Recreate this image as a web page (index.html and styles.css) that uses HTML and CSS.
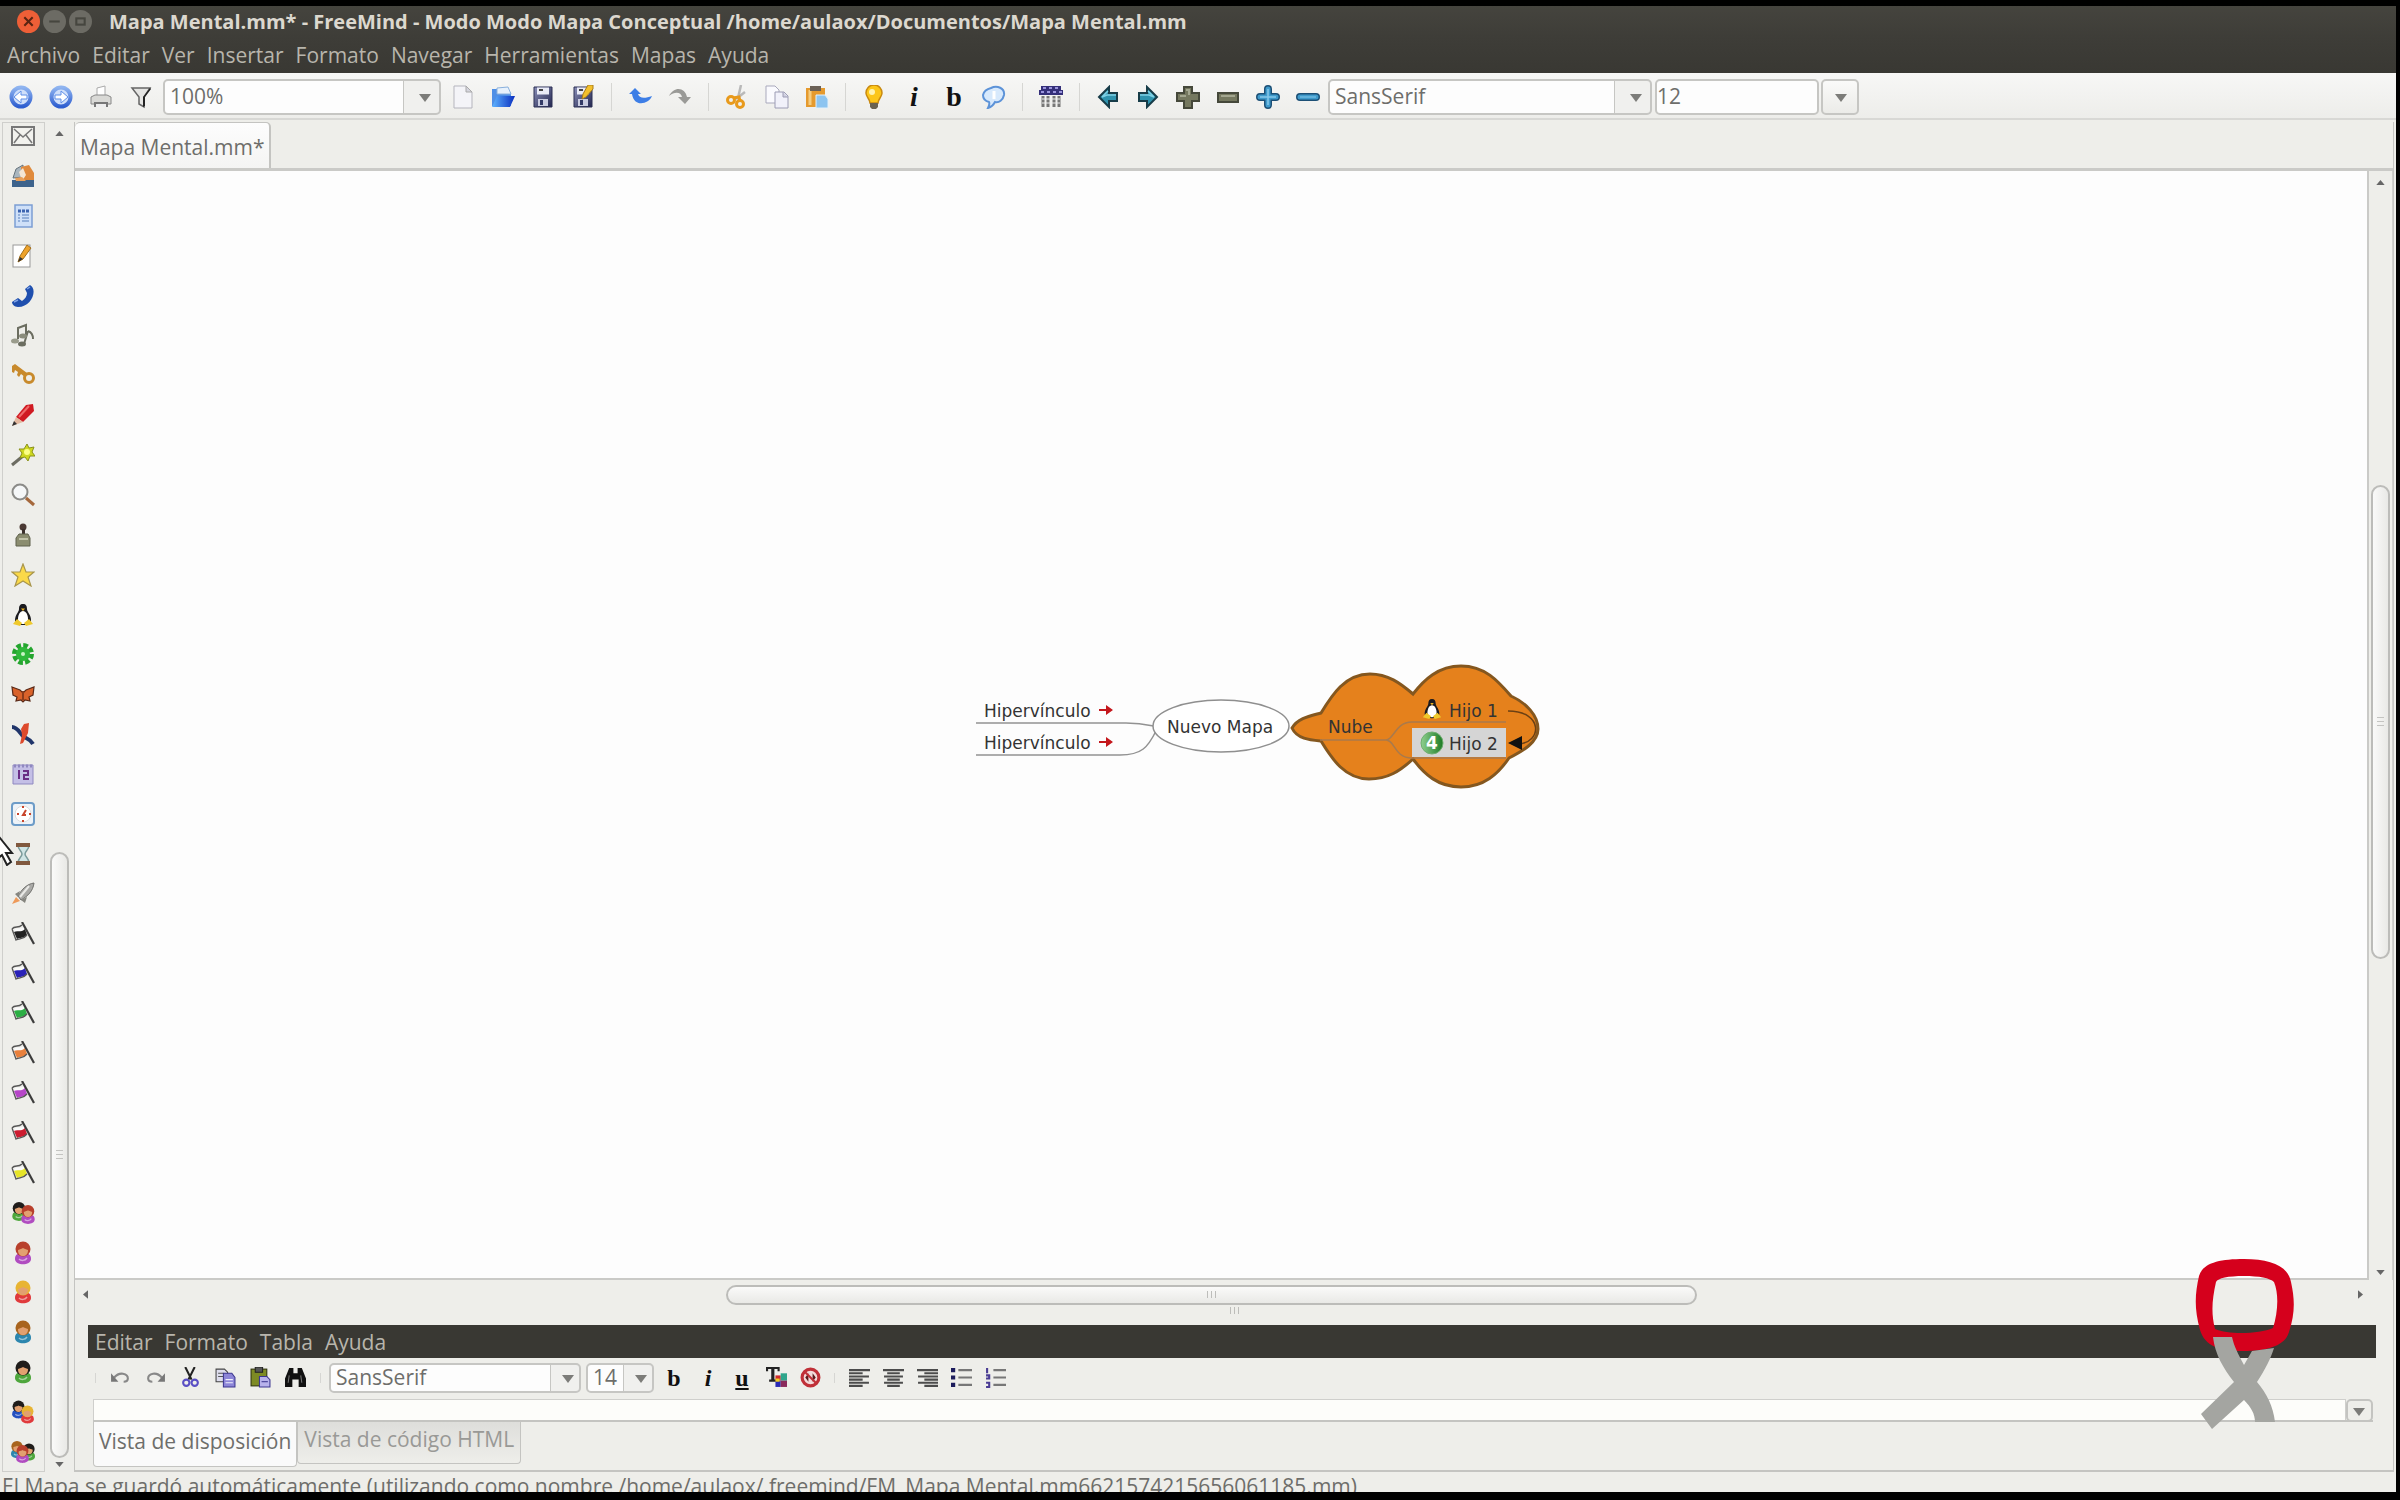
FILE: index.html
```html
<!DOCTYPE html>
<html lang="es">
<head>
  <meta charset="UTF-8" />
  <meta name="viewport" content="width=device-width, initial-scale=1.0" />
  <title>Mapa Mental.mm* - FreeMind</title>
  <link rel="stylesheet" href="styles.css">
</head>
<body>
  <!-- shared icon shapes -->
  <svg class="sprite" aria-hidden="true">
    <defs>
      <linearGradient id="gBlue" x1="0" y1="0" x2="0" y2="1"><stop offset="0" stop-color="#8fb4f0"/><stop offset="1" stop-color="#2f5fd0"/></linearGradient>
      <linearGradient id="gOpen" x1="0" y1="0" x2="1" y2="0"><stop offset="0" stop-color="#5fb4ff"/><stop offset="1" stop-color="#0a2fc0"/></linearGradient>
      <linearGradient id="gDisk" x1="0" y1="0" x2="1" y2="1"><stop offset="0" stop-color="#8a8fb8"/><stop offset="1" stop-color="#23264f"/></linearGradient>
      <linearGradient id="gBall" x1="0" y1="0" x2="1" y2="0"><stop offset="0" stop-color="#8fd08f"/><stop offset="1" stop-color="#1c7a24"/></linearGradient>
    </defs>
    <symbol id="nav-left" viewBox="0 0 24 24"><circle cx="12" cy="12" r="9.500" fill="#cfdffa" stroke="url(#gBlue)" stroke-width="4"/><path d="M18 10h-6V6l-7 6 7 6v-4h6z" fill="#fff" stroke="#5f8fe8"/></symbol>
    <symbol id="nav-right" viewBox="0 0 24 24"><circle cx="12" cy="12" r="9.500" fill="#cfdffa" stroke="url(#gBlue)" stroke-width="4"/><path d="M6 10h6V6l7 6-7 6v-4H6z" fill="#fff" stroke="#5f8fe8"/></symbol>
    <symbol id="disk" viewBox="0 0 24 24"><path d="M3 2h18v20H3z" fill="url(#gDisk)" stroke="#2d3055"/><path d="M6 2.500h12v7H6z" fill="#e9ebf6"/><path d="M8 5h4" stroke="#444" stroke-width="2"/><path d="M7 14h10v7H7z" fill="#c9cce0"/><path d="M9 15h3v5H9z" fill="#333a66"/></symbol>
    <symbol id="penguin" viewBox="0 0 24 24"><path d="M12 1c3 0 4 2 4 5 0 3 4 6 4 11 0 3-3 5-8 5s-8-2-8-5c0-5 4-8 4-11 0-3 1-5 4-5z" fill="#1a1a1e"/><path d="M12 8c3 0 5 4 5 8 0 3-2 5-5 5s-5-2-5-5c0-4 2-8 5-8z" fill="#fff"/><path d="M10 5.500h4L12 8z" fill="#e8b020"/><path d="M2 21l4-5 5 4-2 3zM22 21l-4-5-5 4 2 3z" fill="#efc92c"/></symbol>
    <symbol id="flag" viewBox="0 0 24 24"><path d="M3 8c3-3 6 0 10-3l3 8c-4 4-7 2-10 4z" fill="#fafafa"/><path d="M3 10c3-2 7 1 11-3l2 6c-4 4-7 2-10 4z" fill="currentColor"/><path d="M1 7c3-4 6 0 10-4M1 7l4 11c4-2 7 0 11-5" fill="none" stroke="#555" stroke-width="1.300"/><path d="M11 0l12 22" stroke="#3c3c3c" stroke-width="2.200"/></symbol>
    <symbol id="person" viewBox="0 0 24 24"><path d="M4 18c0-5 3-6 8-6s8 1 8 6c0 7-16 7-16 0z" fill="var(--body)"/><circle cx="12" cy="8" r="7.500" fill="var(--hair)"/><path d="M7 9c2-1 4-1 5-2 1 1 3 1 5 2 0 4-2 6-5 6s-5-2-5-6z" fill="#e2a070"/><path d="M8 18c2 2 6 2 8-1" stroke="#fff" stroke-width="1.500" opacity="0.500" fill="none"/></symbol>
    <symbol id="pageup" viewBox="0 0 10 6"><path d="M0 6l5-6 5 6z" fill="#666"/></symbol>
    <symbol id="blackarrow" viewBox="0 0 24 24"><path d="M21 8v8h-8v6L3 12 13 2v6z" fill="#2f93ae" stroke="#173c48" stroke-width="2"/><path d="M12 6l-6 6 5-2h9" fill="none" stroke="#7fd0e4" stroke-width="1.500"/></symbol>
  </svg>

  <div class="window">
    <header class="titlebar">
      <button class="wm wm-close" aria-label="Cerrar"><svg viewBox="0 0 22 22"><path d="M7 7l8 8M15 7l-8 8" stroke="#5a2412" stroke-width="2"/></svg></button>
      <button class="wm" aria-label="Minimizar"><svg viewBox="0 0 22 22"><path d="M6 11h10" stroke="#46463f" stroke-width="2"/></svg></button>
      <button class="wm" aria-label="Maximizar"><svg viewBox="0 0 22 22"><rect x="7" y="8" width="8" height="6" fill="none" stroke="#46463f" stroke-width="2"/></svg></button>
      <h1 class="title">Mapa Mental.mm* - FreeMind - Modo Modo Mapa Conceptual /home/aulaox/Documentos/Mapa Mental.mm</h1>
    </header>

    <nav class="menubar">
      <a href="#">Archivo</a><a href="#">Editar</a><a href="#">Ver</a><a href="#">Insertar</a><a href="#">Formato</a><a href="#">Navegar</a><a href="#">Herramientas</a><a href="#">Mapas</a><a href="#">Ayuda</a>
    </nav>

    <div class="toolbar">
      <button class="tool" aria-label="Mapa anterior"><svg><use href="#nav-left"/></svg></button>
      <button class="tool" aria-label="Mapa siguiente"><svg><use href="#nav-right"/></svg></button>
      <button class="tool" aria-label="Imprimir"><svg viewBox="0 0 24 24"><path d="M8 12V3l8-2v11" fill="#fff" stroke="#aaa"/><path d="M2 12l4-2h12l4 2v7H2z" fill="#d9d9d6" stroke="#888"/><path d="M5 17h14v5H5z" fill="#777"/><path d="M7 19h10v3H7z" fill="#eee"/></svg></button>
      <button class="tool" aria-label="Filtrar"><svg viewBox="0 0 24 24"><path d="M3 3h18l-6 9v10l-5-3v-7z" fill="#e4e4e2" stroke="#666" stroke-width="1.500"/><path d="M21 3l-7 9v10l2-1V12l6-8z" fill="#222"/></svg></button>
      <span class="combo combo-zoom"><select aria-label="Zoom"><option>100%</option></select></span>
      <button class="tool" aria-label="Nuevo"><svg viewBox="0 0 24 24"><path d="M3 1h12l6 6v16H3z" fill="#f4f4f8" stroke="#b5b5bd"/><path d="M15 1v6h6z" fill="#d5d5de" stroke="#aaa"/></svg></button>
      <button class="tool" aria-label="Abrir"><svg viewBox="0 0 24 24"><path d="M1 4h8l2 3h9v14H1z" fill="#4f8fe6"/><path d="M6 3l11-1 3 7H6z" fill="#e7f1fc" stroke="#8ab0dc"/><path d="M1 22l5-11h18l-5 11z" fill="url(#gOpen)"/></svg></button>
      <button class="tool" aria-label="Guardar"><svg><use href="#disk"/></svg></button>
      <button class="tool" aria-label="Guardar como"><svg viewBox="0 0 24 24"><use href="#disk"/><path d="M11 14l1-5 5-9h5v4l-7 8z" fill="#f3c02c" stroke="#a87c1c"/></svg></button>
      <span class="sep"></span>
      <button class="tool" aria-label="Deshacer"><svg viewBox="0 0 24 24"><path d="M1 9l6-6 6 6H10c1 4 6 5 14 2-3 8-18 12-20-2z" fill="#3d7ee6"/></svg></button>
      <button class="tool" aria-label="Rehacer"><svg viewBox="0 0 24 24"><path d="M1 11C6 1 17 2 19 12h4l-6 7-7-7h4C13 7 7 6 1 11z" fill="#9a9a97"/></svg></button>
      <span class="sep"></span>
      <button class="tool" aria-label="Cortar"><svg viewBox="0 0 24 24"><path d="M16 0l-3 13M20 7l-9 7" stroke="#b9b9b9" stroke-width="2.500"/><path d="M8 13l6-1 1 4" fill="none" stroke="#e89a1c" stroke-width="3"/><circle cx="6" cy="15" r="3.500" fill="none" stroke="#e89a1c" stroke-width="3"/><circle cx="15" cy="19" r="3.500" fill="none" stroke="#e89a1c" stroke-width="3"/></svg></button>
      <button class="tool" aria-label="Copiar"><svg viewBox="0 0 24 24"><path d="M1 1h9l4 4v13H1z" fill="#fafafe" stroke="#a9a9bc"/><path d="M10 7h9l4 4v12H10z" fill="#f1f1fa" stroke="#9c9cb4"/><path d="M18 7v5h5" fill="#d0d0e0" stroke="#9c9cb4"/></svg></button>
      <button class="tool" aria-label="Pegar"><svg viewBox="0 0 24 24"><rect x="1" y="3" width="19" height="19" fill="#e59a2e"/><path d="M5 5v15" stroke="#f5cc7e" stroke-width="3"/><path d="M5 1h11v5H5z" fill="#6b6157"/><path d="M11 10h9l3 4v9H11z" fill="#8cc4f0" stroke="#e3f1fb"/></svg></button>
      <span class="sep"></span>
      <button class="tool" aria-label="Idea"><svg viewBox="0 0 24 24"><path d="M12 0c5 0 8 4 8 8 0 4-4 6-4 10H8c0-4-4-6-4-10 0-4 3-8 8-8z" fill="#fcc61a" stroke="#c98a10" stroke-width="1.500"/><circle cx="10" cy="7" r="3" fill="#fff3b0"/><path d="M8 18h8v4l-2 2h-4l-2-2z" fill="#6a6250"/></svg></button>
      <button class="tool glyph glyph-i" aria-label="Cursiva">i</button>
      <button class="tool glyph" aria-label="Negrita">b</button>
      <button class="tool" aria-label="Nube"><svg viewBox="0 0 24 24"><path d="M9 3c6-3 14 0 13 7-1 5-5 8-9 7-1 2-4 5-7 6 1-2 2-4 1-6-4-1-6-3-6-7 1-4 4-6 8-7z" fill="#d7e9fc" stroke="#5d93d8" stroke-width="2"/><path d="M12 6v8" stroke="#fff" stroke-width="3"/></svg></button>
      <span class="sep"></span>
      <button class="tool" aria-label="Atributos"><svg viewBox="0 0 24 24"><path d="M2 1h20v4h2v5H0V5h2z" fill="#35307a"/><path d="M4 3h3M10 3h3M16 3h3M2 7h3M8 7h3M14 7h3M20 7h3" stroke="#9a94dc" stroke-width="2"/><path d="M4 11v11M9 11v11M15 11v11M20 11v11" stroke="#777" stroke-width="3"/><path d="M3 14h18M3 18h18" stroke="#eee"/></svg></button>
      <span class="sep"></span>
      <button class="tool" aria-label="Anterior"><svg><use href="#blackarrow"/></svg></button>
      <button class="tool" aria-label="Siguiente"><svg class="flip"><use href="#blackarrow"/></svg></button>
      <button class="tool" aria-label="Ampliar"><svg viewBox="0 0 24 24"><path d="M8 2h8v6h7v8h-7v7H8v-7H1V8h7z" fill="#75785f" stroke="#45483a" stroke-width="2"/><path d="M10 5h3v5M4 11h6" stroke="#a3a68f" stroke-width="2" fill="none"/></svg></button>
      <button class="tool" aria-label="Reducir"><svg viewBox="0 0 24 24"><rect x="2" y="8" width="20" height="9" fill="#75785f" stroke="#45483a" stroke-width="2"/><path d="M5 11h14" stroke="#a3a68f" stroke-width="2"/></svg></button>
      <button class="tool" aria-label="Desplegar"><svg viewBox="0 0 24 24"><path d="M12 4v16M4 12h16" stroke="#1c4f75" stroke-width="8" stroke-linecap="round"/><path d="M12 4v16M4 12h16" stroke="#3f9acb" stroke-width="5" stroke-linecap="round"/><path d="M12 4v16M4 12h16" stroke="#86c8ea" stroke-width="1.500"/></svg></button>
      <button class="tool" aria-label="Plegar"><svg viewBox="0 0 24 24"><path d="M4 12h16" stroke="#1c4f75" stroke-width="8" stroke-linecap="round"/><path d="M4 12h16" stroke="#3f9acb" stroke-width="5" stroke-linecap="round"/><path d="M4 12h16" stroke="#86c8ea"/></svg></button>
      <span class="combo combo-font"><select aria-label="Fuente"><option>SansSerif</option></select></span>
      <input class="size-input" type="text" value="12" aria-label="Tamaño de fuente">
      <button class="drop" aria-label="Tamaños"></button>
    </div>

    <div class="workspace">
      <aside class="iconbar">
        <button aria-label="Correo"><svg viewBox="0 0 24 24"><rect x="1" y="3" width="22" height="18" fill="#f2f2ee" stroke="#777" stroke-width="2"/><path d="M3 5l9 8 9-8M3 19l6-8M21 19l-6-8" fill="none" stroke="#777" stroke-width="1.500"/></svg></button>
        <button aria-label="Buzón"><svg viewBox="0 0 24 24"><path d="M2 14l3-9 7-4v12z" fill="#a9b6bf" stroke="#66737c"/><path d="M10 3l8-2 5 8v8H11z" fill="#e08a3c"/><path d="M8 8l4-4 3 7-4 6z" fill="#f4e6d4"/><path d="M1 16h22v7H1z" fill="#3d638c"/><path d="M4 14l7-1 4 4H5z" fill="#e9a05a"/></svg></button>
        <button aria-label="Lista"><svg viewBox="0 0 24 24"><rect x="4" y="1" width="17" height="22" fill="#cfe0f8" stroke="#7c9ed4" stroke-width="1.500"/><path d="M7 7h11" stroke="#3c64b0" stroke-width="3" stroke-dasharray="3 1"/><path d="M7 11h2M11 11h7M7 14h2M11 14h7M7 17h2M11 17h7" stroke="#7f9fd0" stroke-width="1.500"/></svg></button>
        <button aria-label="Editar"><svg viewBox="0 0 24 24"><rect x="2" y="1" width="17" height="22" fill="#fff" stroke="#999"/><path d="M7 18l2-6L16 1l4 3-8 11z" fill="#eea32c" stroke="#a3701c"/><path d="M7 18l2-5 3 2z" fill="#333"/></svg></button>
        <button aria-label="Teléfono"><svg viewBox="0 0 24 24"><path d="M1 18l6-4 4 3c3-2 5-5 5-8l-2-4 5-4c8 4 2 22-12 22-4 0-6-3-6-5z" fill="#1f4fae"/><path d="M3 18l4-2M16 5l3-2" stroke="#7ea2e6" stroke-width="1.500"/></svg></button>
        <button aria-label="Música"><svg viewBox="0 0 24 24"><path d="M7 16V5l8-3v10M17 8c3 1 5 4 5 8M17 8l-4 13" fill="none" stroke="#6b6d60" stroke-width="2"/><ellipse cx="4" cy="18" rx="4" ry="2.500" fill="#9a9c8c"/><ellipse cx="12" cy="13" rx="4" ry="2.500" fill="#8a8c7c"/><ellipse cx="11" cy="21" rx="4" ry="2.500" fill="#6b6d60"/></svg></button>
        <button aria-label="Clave"><svg viewBox="0 0 24 24"><path d="M1 3l3-2 12 9-2 4-4-3-2 3-2-2 1-3-3-2-1 3-2-1z" fill="#c88a2c"/><circle cx="18" cy="15" r="4.500" fill="none" stroke="#c88a2c" stroke-width="3"/></svg></button>
        <button aria-label="Lápiz"><svg viewBox="0 0 24 24"><path d="M5 14L15 2l7-1 1 7-11 11z" fill="#d01a22"/><path d="M8 14L18 3" stroke="#ee6a6a" stroke-width="2"/><path d="M1 23l4-9 7 5z" fill="#e3b9a0"/><path d="M1 23l2-5 3 3z" fill="#333"/></svg></button>
        <button aria-label="Asistente"><svg viewBox="0 0 24 24"><path d="M1 22l11-9" stroke="#6c6c62" stroke-width="3"/><path d="M16 1l2 4 5-1-2 5 3 4-5 0-2 5-3-4-5 1 2-5-3-4 5 0z" fill="#cfd820" stroke="#8a921c"/><circle cx="16" cy="9" r="3" fill="#fcff86"/></svg></button>
        <button aria-label="Buscar"><svg viewBox="0 0 24 24"><circle cx="9" cy="9" r="7.500" fill="#f5f7f8" stroke="#8b8b88" stroke-width="2"/><path d="M15 15l8 7" stroke="#a5683c" stroke-width="3"/></svg></button>
        <button aria-label="Pincel"><svg viewBox="0 0 24 24"><circle cx="12" cy="4" r="3.500" fill="#4b3a34"/><path d="M11 6h3v7h-3z" fill="#3a2f2b"/><path d="M8 11h9l2 4v8H5v-8z" fill="#8b8d70" stroke="#5f614c"/><path d="M8 16h9" stroke="#c0c2a8" stroke-width="2"/></svg></button>
        <button aria-label="Estrella"><svg viewBox="0 0 24 24"><path d="M12 1l3 8h8l-6 5 3 9-8-5-8 5 3-9-6-5h8z" fill="#fbd948" stroke="#a8954c" stroke-width="1.200"/></svg></button>
        <button aria-label="Linux"><svg><use href="#penguin"/></svg></button>
        <button aria-label="Trébol"><svg viewBox="0 0 24 24"><circle cx="12" cy="12" r="8.500" fill="none" stroke="#24a52e" stroke-width="5" stroke-dasharray="4.500 2.175"/><circle cx="12" cy="12" r="7" fill="#2fb83a"/><circle cx="12" cy="12" r="2" fill="#c8f4c4"/></svg></button>
        <button aria-label="Mariposa"><svg viewBox="0 0 24 24"><path d="M1 5l8 3 3 3 3-3 8-3-1 8-4 2 1 4-5-1-2 2-2-2-5 1 1-4-4-2z" fill="#d9622a" stroke="#5a2a18" stroke-width="1.200"/><path d="M12 9v9" stroke="#8c3c1c" stroke-width="2"/></svg></button>
        <button aria-label="Corredor"><svg viewBox="0 0 24 24"><path d="M1 5c6 0 8 7 12 10 4 2 6 2 9 7" fill="none" stroke="#20356a" stroke-width="4"/><path d="M13 2l5-1-1 10-5 10-3 1 2-9-1-6z" fill="#dd4a2c"/></svg></button>
        <button aria-label="Calendario"><svg viewBox="0 0 24 24"><path d="M2 3h20v19H2z" fill="#c4bfe6" stroke="#8f88c0"/><path d="M3 4h18" stroke="#8f88c0" stroke-width="3" stroke-dasharray="2 2"/><path d="M8 8v9M12 9h5v4h-4v4h5" fill="none" stroke="#6a2c86" stroke-width="2"/></svg></button>
        <button aria-label="Reloj"><svg viewBox="0 0 24 24"><rect x="1" y="1" width="22" height="22" rx="3" fill="#eef3f8" stroke="#6d9cc8" stroke-width="2"/><circle cx="12" cy="12" r="8" fill="#fff" stroke="#ddd"/><path d="M15 8l-3 5h3M6 12h2M12 4v2M12 18v2M18 12h2" fill="none" stroke="#c8452c" stroke-width="2"/></svg></button>
        <button aria-label="Reloj de arena"><svg viewBox="0 0 24 24"><path d="M7 3h11c0 5-4 6-4 9s4 4 4 9H7c0-5 4-6 4-9S7 8 7 3z" fill="#cfe4e4" stroke="#7a9a9a" stroke-width="1.500"/><path d="M5 1h14v4H5zM5 19h14v4H5z" fill="#80583e"/></svg></button>
        <button aria-label="Cohete"><svg viewBox="0 0 24 24"><path d="M23 1c-7 1-12 6-16 13l3 4c7-4 12-9 13-17z" fill="#a9a9a6" stroke="#6f6f6c"/><path d="M9 9l-5 3 3 3M16 15l-2 6-4-3" fill="#85857f"/><path d="M1 22l4-7 4 4z" fill="#ee9a5a"/><path d="M18 4l-9 11" stroke="#e9e9e6" stroke-width="2"/></svg></button>
        <button class="flag-black" aria-label="Bandera negra"><svg><use href="#flag"/></svg></button>
        <button class="flag-blue" aria-label="Bandera azul"><svg><use href="#flag"/></svg></button>
        <button class="flag-green" aria-label="Bandera verde"><svg><use href="#flag"/></svg></button>
        <button class="flag-orange" aria-label="Bandera naranja"><svg><use href="#flag"/></svg></button>
        <button class="flag-pink" aria-label="Bandera rosa"><svg><use href="#flag"/></svg></button>
        <button class="flag-red" aria-label="Bandera roja"><svg><use href="#flag"/></svg></button>
        <button class="flag-yellow" aria-label="Bandera amarilla"><svg><use href="#flag"/></svg></button>
        <button aria-label="Amigos"><svg viewBox="0 0 24 24"><use class="male2" href="#person" x="-2" y="0" width="20" height="21"/><use class="female1" href="#person" x="7" y="3" width="20" height="21"/></svg></button>
        <button class="female1" aria-label="Mujer 1"><svg><use href="#person"/></svg></button>
        <button class="female2" aria-label="Mujer 2"><svg><use href="#person"/></svg></button>
        <button class="male1" aria-label="Hombre 1"><svg><use href="#person"/></svg></button>
        <button class="male2" aria-label="Hombre 2"><svg><use href="#person"/></svg></button>
        <button aria-label="Pareja"><svg viewBox="0 0 24 24"><use class="male3" href="#person" x="-2" y="0" width="19" height="19"/><use class="female2" href="#person" x="7" y="5" width="19" height="19"/></svg></button>
        <button aria-label="Familia"><svg viewBox="0 0 24 24"><use class="male1" href="#person" x="-3" y="0" width="18" height="19"/><use class="male2" href="#person" x="9" y="2" width="18" height="20"/><use class="female1" href="#person" x="2" y="4" width="19" height="20"/></svg></button>
      </aside>

      <div class="scroll-v scroll-icons">
        <svg class="arrow"><use href="#pageup"/></svg>
        <div class="track"><div class="thumb"></div></div>
        <svg class="arrow down"><use href="#pageup"/></svg>
      </div>

      <main class="pane">
        <div class="tabs"><button class="tab">Mapa Mental.mm*</button></div>
        <div class="map-area">
          <div class="canvas">
            <svg class="mindmap" viewBox="901 624 640 200" width="640" height="200">
              <path d="M1292 727C1298 717 1310 715 1321 712C1332 694 1345 673 1370 673C1388 673 1400 682 1413 693C1424 679 1438 665 1461 665C1485 665 1498 680 1511 695C1526 702 1538 714 1538 728C1538 741 1523 750 1509 757C1498 773 1484 786 1461 786C1438 786 1424 773 1413 758C1400 770 1388 778 1369 778C1345 778 1332 758 1321 740C1310 739 1297 738 1292 727Z" fill="#e5811c" stroke="#84571f" stroke-width="3"/>
              <g fill="none" stroke="#929292" stroke-width="1.500">
                <path d="M976 722h150c14 0 18 1 27 3M976 754h144c22 0 28-8 36-24"/>
                <path d="M1320 739h66c8 0 9-18 26-18h94M1386 739c9 0 8 18 26 18h94" stroke="#a97a4c"/>
              </g>
              <ellipse cx="1221" cy="725" rx="68" ry="26" fill="#fff" stroke="#8f8f8f" stroke-width="1.500"/>
              <rect x="1412" y="727" width="94" height="29" fill="#d5d5d5"/>
              <path d="M1508 710c36 0 34 32 10 33" fill="none" stroke="#6b4014" stroke-width="1.500"/>
              <path d="M1508 742l14-7v14z" fill="#111"/>
              <path d="M1099 708h7v-4l7 5-7 5v-4h-7zM1099 740h7v-4l7 5-7 5v-4h-7z" fill="#c4171c"/>
              <use href="#penguin" x="1421" y="697" width="22" height="22"/>
              <circle cx="1432" cy="742" r="11" fill="url(#gBall)" stroke="#6fae70"/>
              <text x="1432" y="748" class="ball">4</text>
              <text x="984" y="716">Hipervínculo</text>
              <text x="984" y="748">Hipervínculo</text>
              <text x="1167" y="732">Nuevo Mapa</text>
              <text x="1328" y="732">Nube</text>
              <text x="1449" y="716">Hijo 1</text>
              <text x="1449" y="749">Hijo 2</text>
            </svg>
          </div>
          <div class="scroll-v scroll-map">
            <svg class="arrow"><use href="#pageup"/></svg>
            <div class="track"><div class="thumb"></div></div>
            <svg class="arrow down"><use href="#pageup"/></svg>
          </div>
        </div>
        <div class="scroll-h">
          <svg class="arrow left"><use href="#pageup"/></svg>
          <div class="track"><div class="thumb"></div></div>
          <svg class="arrow right"><use href="#pageup"/></svg>
        </div>
        <div class="splitter"></div>

        <section class="editor">
          <nav class="menubar editor-menu">
            <a href="#">Editar</a><a href="#">Formato</a><a href="#">Tabla</a><a href="#">Ayuda</a>
          </nav>
          <div class="editor-tools">
            <span class="sep sep-small"></span>
            <button class="tool tool-wide" aria-label="Deshacer"><svg viewBox="0 0 20 20"><path d="M4 10c5-6 13-4 13 1 0 2-2 3-4 3" fill="none" stroke="#888" stroke-width="2"/><path d="M1 6v8h7z" fill="#777"/></svg></button>
            <button class="tool tool-wide" aria-label="Rehacer"><svg viewBox="0 0 20 20"><path d="M16 10C11 4 3 6 3 11c0 2 2 3 4 3" fill="none" stroke="#888" stroke-width="2"/><path d="M19 6v8h-7z" fill="#777"/></svg></button>
            <button class="tool tool-wide" aria-label="Cortar"><svg viewBox="0 0 20 20"><path d="M5 0l6 12M14 0L8 12" stroke="#222" stroke-width="2"/><circle cx="6" cy="15" r="3" fill="none" stroke="#5a4fc4" stroke-width="2"/><circle cx="14" cy="15" r="3" fill="none" stroke="#5a4fc4" stroke-width="2"/></svg></button>
            <button class="tool tool-wide" aria-label="Copiar"><svg viewBox="0 0 20 20"><path d="M1 2h8l3 3v9H1z" fill="#dedeee" stroke="#444"/><path d="M3 6h5M3 9h5" stroke="#555"/><path d="M8 6h8l3 4v9H8z" fill="#8d86d8" stroke="#3c3690"/><path d="M10 12h7M10 15h7" stroke="#f0f0fc"/></svg></button>
            <button class="tool tool-wide" aria-label="Pegar"><svg viewBox="0 0 20 20"><rect x="1" y="2" width="15" height="16" fill="#7d8a24" stroke="#2f340e"/><path d="M5 0h7v5H5z" fill="#555" stroke="#222"/><path d="M9 9h7l3 3v7H9z" fill="#b8b2ec" stroke="#3c3690"/><path d="M11 14h6" stroke="#3c3690"/></svg></button>
            <button class="tool tool-wide" aria-label="Buscar"><svg viewBox="0 0 20 20"><path d="M4 1h4v5h4V1h4l4 10v8h-7v-7H7v7H0v-8z" fill="#111"/><path d="M4 8l-1 7M15 8l1 7" stroke="#777"/></svg></button>
            <span class="sep sep-small"></span>
            <span class="combo combo-small combo-font2"><select aria-label="Fuente del editor"><option>SansSerif</option></select></span>
            <span class="combo combo-small combo-size2"><select aria-label="Tamaño del editor"><option>14</option></select></span>
            <button class="tool glyph" aria-label="Negrita">b</button>
            <button class="tool glyph glyph-i" aria-label="Cursiva">i</button>
            <button class="tool glyph glyph-u" aria-label="Subrayado">u</button>
            <button class="tool" aria-label="Color"><svg viewBox="0 0 20 20"><path d="M0 0h13v4h-2V2H8v10h2v2H3v-2h2V2H2v2H0z" fill="#222"/><path d="M9 8h5v5H9z" fill="#d02a2a"/><path d="M14 6h6v7h-6z" fill="#2fa58c"/><path d="M9 13h5v6H9z" fill="#2a2ab4"/><path d="M14 13h6v6h-6z" fill="#8a2a5c"/><path d="M9 11h4v3H9z" fill="#f0d020"/></svg></button>
            <button class="tool" aria-label="Quitar formato"><svg viewBox="0 0 20 20"><circle cx="10" cy="10" r="8" fill="#f2dada" stroke="#c03038" stroke-width="3"/><path d="M5 10l3-4v8zM15 10l-3-4v8z" fill="#5c1c1c"/><path d="M5 5l10 10" stroke="#c03038" stroke-width="2"/></svg></button>
            <span class="sep sep-small"></span>
            <button class="tool" aria-label="Alinear a la izquierda"><svg viewBox="0 0 20 20"><path d="M0 3h20M0 6h13M0 9h19M0 12h13M0 15h19M0 18h13" stroke="#4c4c4c" stroke-width="2"/></svg></button>
            <button class="tool" aria-label="Centrar"><svg viewBox="0 0 20 20"><path d="M0 3h20M4 6h12M1 9h18M4 12h12M1 15h18M4 18h12" stroke="#4c4c4c" stroke-width="2"/></svg></button>
            <button class="tool" aria-label="Alinear a la derecha"><svg viewBox="0 0 20 20"><path d="M0 3h20M7 6h13M1 9h19M7 12h13M1 15h19M7 18h13" stroke="#4c4c4c" stroke-width="2"/></svg></button>
            <button class="tool" aria-label="Lista con viñetas"><svg viewBox="0 0 20 20"><path d="M7 3h13M7 10h13M7 17h13" stroke="#777" stroke-width="2"/><path d="M0 3h4M0 10h4M0 17h4" stroke="#1c1c5c" stroke-width="4"/></svg></button>
            <button class="tool" aria-label="Lista numerada"><svg viewBox="0 0 20 20"><path d="M8 3h12M8 10h12M8 17h12" stroke="#777" stroke-width="2"/><path d="M2 1v5M1 8h3v3H1M1 15h3v4H1" stroke="#4a3c94" stroke-width="2" fill="none"/></svg></button>
          </div>
          <div class="note">
            <input class="note-text" type="text" aria-label="Nota">
            <button class="note-scroll" aria-label="Bajar"></button>
          </div>
          <div class="view-tabs">
            <button class="view-tab active">Vista de disposición</button>
            <button class="view-tab">Vista de código HTML</button>
          </div>
        </section>
      </main>
    </div>

    <footer class="status">El Mapa se guardó automáticamente (utilizando como nombre /home/aulaox/.freemind/FM_Mapa Mental.mm6621574215656061185.mm)</footer>

    <svg class="cursor" viewBox="0 0 16 30"><path d="M-8 -8L12 17H6l5 9-4 3-5-10-6 5z" fill="#fff" stroke="#222" stroke-width="2"/></svg>
    <svg class="brand" viewBox="0 0 100 172" role="img" aria-label="aulaox">
      <path d="M49 1C76 1 93 8 96 24C100 42 100 56 94 74C90 88 72 93 48 93C24 93 10 88 5 72C-1 50 0 36 4 18C8 5 24 1 49 1ZM49 18C33 18 23 20 21 24C17 42 16 55 20 71C34 77 64 76 78 70C83 54 84 36 79 24C75 20 64 18 49 18Z" fill="#d5001c" fill-rule="evenodd"/>
      <path d="M18 79H37C39 88 43 96 49 107L57 93L79 90C76 100 70 112 62 124C72 136 78 148 80 164H60C60 156 56 149 49 142L17 171L6 156L39 124C28 110 20 96 18 79Z" fill="#a4a5a1"/>
    </svg>
  </div>
</body>
</html>
```
FILE: styles.css
```css
* {
  box-sizing: border-box;
}
body {
  margin: 0;
  height: 100vh;
  padding: 6px 4px 8px 0;
  background: #000;
  overflow: hidden;
  font-family: "Open Sans", "Noto Sans", sans-serif;
  font-size: 21px;
  color: #6e6e6b;
}
button,
input,
select {
  font: inherit;
  color: inherit;
  margin: 0;
  padding: 0;
  border: none;
  background: none;
  border-radius: 0;
}
.sprite {
  position: absolute;
  width: 0;
  height: 0;
}
.window {
  position: relative;
  height: 100%;
  display: flex;
  flex-direction: column;
  background: #eeeeea;
  overflow: hidden;
}

/* title bar and menus */
.titlebar {
  display: flex;
  align-items: center;
  height: 31px;
  padding-left: 17px;
  gap: 3px;
  background: linear-gradient(#45443e, #3e3d38);
  flex: none;
}
.wm {
  width: 23px;
  height: 23px;
  border-radius: 50%;
  background: #6c6b64;
}
.wm-close {
  background: #ee5f37;
}
.wm svg {
  display: block;
  width: 23px;
  height: 23px;
}
.title {
  margin: 0 0 0 14px;
  font-size: 20px;
  line-height: 30px;
  font-weight: bold;
  color: #dcd8cf;
  white-space: nowrap;
}
.menubar {
  display: flex;
  align-items: center;
  gap: 12px;
  height: 36px;
  padding-left: 7px;
  background: linear-gradient(#3e3d38, #393833);
  flex: none;
}
.menubar a {
  color: #b8b5ac;
  text-decoration: none;
}

/* main toolbar */
.toolbar {
  display: flex;
  align-items: center;
  height: 47px;
  padding: 2px 0 0 1px;
  background: linear-gradient(#f7f7f6, #ededea);
  border-bottom: 2px solid #d8d8d5;
  flex: none;
}
.tool {
  width: 40px;
  height: 34px;
  display: flex;
  align-items: center;
  justify-content: center;
  flex: none;
}
.tool svg {
  width: 24px;
  height: 24px;
}
.tool .flip {
  transform: scaleX(-1);
}
.glyph {
  font-family: "Liberation Serif", serif;
  font-size: 28px;
  font-weight: bold;
  line-height: 28px;
  color: #111;
}
.glyph-i {
  font-style: italic;
}
.glyph-u {
  text-decoration: underline;
}
.sep {
  width: 1px;
  height: 28px;
  margin: 0 8px;
  background: #d6d6d3;
  flex: none;
}
.combo {
  position: relative;
  flex: none;
}
.combo select {
  appearance: none;
  display: block;
  width: 100%;
  height: 36px;
  padding: 0 40px 2px 5px;
  border: 2px solid #c6c6c3;
  border-radius: 5px;
  background: linear-gradient(to right, transparent calc(100% - 36px), #c6c6c3 calc(100% - 36px), #c6c6c3 calc(100% - 35px), #f0f0ee calc(100% - 35px)) #fdfdfd;
}
.combo::after,
.drop::after,
.note-scroll::after {
  content: '';
  position: absolute;
  right: 10px;
  top: 50%;
  border: 6px solid transparent;
  border-top: 8px solid #7c7c79;
  border-bottom: none;
  transform: translateY(-3px);
}
.combo-zoom {
  width: 278px;
  margin: 0 2px;
}
.combo-font {
  width: 324px;
  margin-right: 3px;
}
.size-input {
  width: 164px;
  height: 36px;
  padding-bottom: 2px;
  border: 2px solid #c6c6c3;
  border-radius: 5px;
  background: #fdfdfd;
}
.drop {
  position: relative;
  width: 38px;
  height: 36px;
  margin-left: 2px;
  border: 2px solid #c6c6c3;
  border-radius: 5px;
  background: linear-gradient(#fafaf9, #ebebe8);
}

/* workspace */
.workspace {
  flex: 1;
  min-height: 0;
  display: flex;
  padding: 2px 2px 1px 2px;
}
.iconbar {
  width: 43px;
  display: flex;
  flex-direction: column;
  justify-content: space-between;
  align-items: center;
  padding: 1px 2px 7px 0;
  border: 1px solid #cfcfcc;
  flex: none;
}
.iconbar button {
  height: 24px;
}
.iconbar svg {
  display: block;
  width: 24px;
  height: 24px;
}
.flag-black { color: #222; }
.flag-blue { color: #2a22b8; }
.flag-green { color: #2cae44; }
.flag-orange { color: #e8803c; }
.flag-pink { color: #b646c8; }
.flag-red { color: #cc1c30; }
.flag-yellow { color: #e6e428; }
.female1 { --hair: #b8402c; --body: #b04cc0; }
.female2 { --hair: #e8b432; --body: #e03a3c; }
.male1 { --hair: #a8641e; --body: #2c86ae; }
.male2 { --hair: #1f1c1a; --body: #4ea63c; }
.male3 { --hair: #1f1c1a; --body: #2450c0; }

/* scrollbars */
.scroll-v {
  display: flex;
  flex-direction: column;
  align-items: center;
  padding: 9px 0 5px;
  flex: none;
}
.scroll-icons {
  width: 29px;
}
.scroll-map {
  width: 24px;
  border-right: 1px solid #cfcfcc;
}
.arrow {
  width: 9px;
  height: 5px;
  flex: none;
}
.arrow.down {
  transform: rotate(180deg);
}
.arrow.left {
  transform: rotate(-90deg);
}
.arrow.right {
  transform: rotate(90deg);
}
.track {
  flex: 1;
  display: flex;
}
.thumb {
  display: flex;
  align-items: center;
  justify-content: center;
  border: 2px solid #bcbcb9;
  border-radius: 10px;
  background: linear-gradient(to right, #fafaf9, #e9e9e6);
}
.scroll-v .track {
  flex-direction: column;
  margin: 4px 0;
}
.scroll-v .thumb {
  width: 19px;
}
.scroll-icons .thumb {
  margin-top: auto;
  height: 46%;
}
.scroll-map .thumb {
  margin-top: 296px;
  height: 44%;
}
.scroll-h {
  display: flex;
  align-items: center;
  height: 27px;
  padding: 2px 28px 0 6px;
  flex: none;
}
.scroll-h .track {
  margin: 0 4px;
}
.scroll-h .thumb {
  width: 43%;
  height: 20px;
  margin-left: 28%;
  background: linear-gradient(#fafaf9, #e9e9e6);
}
.thumb::after,
.splitter::after {
  content: '';
  width: 9px;
  height: 7px;
  background: repeating-linear-gradient(to right, #bdbdba 0, #bdbdba 1px, transparent 1px, transparent 4px);
}
.scroll-v .thumb::after {
  width: 7px;
  height: 9px;
  background: repeating-linear-gradient(#c4c4c1 0, #c4c4c1 1px, transparent 1px, transparent 4px);
}

/* map pane */
.pane {
  flex: 1;
  min-width: 0;
  display: flex;
  flex-direction: column;
  border: 1px solid #c4c4c1;
  border-width: 0 1px 2px;
}
.tabs {
  display: flex;
  height: 49px;
  border-bottom: 3px solid #cacac7;
  flex: none;
}
.tab {
  padding: 2px 4px 0 5px;
  border: 1px solid #c4c4c1;
  border-width: 1px 2px 0 0;
  border-radius: 5px 5px 0 0;
  background: linear-gradient(#fdfdfd, #f4f4f3);
}
.map-area {
  flex: 1;
  min-height: 0;
  display: flex;
}
.canvas {
  flex: 1;
  min-width: 0;
  display: flex;
  align-items: center;
  justify-content: center;
  background: #fdfdfd;
  border: 1px solid #cacac7;
  border-width: 0 2px 2px 0;
}
.mindmap {
  flex: none;
  font-family: "DejaVu Sans", sans-serif;
  font-size: 17px;
  fill: #333;
}
.mindmap .ball {
  fill: #fff;
  font-weight: bold;
  text-anchor: middle;
}
.splitter {
  display: flex;
  justify-content: center;
  height: 18px;
  flex: none;
}

/* note editor */
.editor {
  padding: 0 17px 3px 13px;
  flex: none;
}
.editor-menu {
  height: 33px;
  background: #393833;
}
.editor-tools {
  display: flex;
  align-items: center;
  height: 41px;
  padding-bottom: 2px;
}
.editor-tools .tool {
  width: 34px;
}
.editor-tools .tool-wide {
  width: 35px;
}
.editor-tools .tool svg {
  width: 21px;
  height: 21px;
}
.editor-tools .glyph {
  font-size: 24px;
}
.combo-small select {
  height: 30px;
  line-height: 24px;
  padding-right: 30px;
  background: linear-gradient(to right, transparent calc(100% - 29px), #c6c6c3 calc(100% - 29px), #c6c6c3 calc(100% - 28px), #f0f0ee calc(100% - 28px)) #fdfdfd;
}
.combo-small::after {
  right: 7px;
}
.sep-small {
  height: 10px;
  margin: 0 7px;
}
.combo-font2 {
  width: 252px;
  margin: 0 5px 0 1px;
}
.combo-size2 {
  width: 68px;
  margin-right: 3px;
}
.note {
  display: flex;
  margin: 0 3px 0 5px;
  height: 23px;
  border-bottom: 2px solid #c4c4c1;
}
.note-text {
  flex: 1;
  background: #fdfdfa;
  border: 1px solid #cfcfcc;
  border-bottom: none;
}
.note-scroll {
  position: relative;
  width: 27px;
  height: 23px;
  border: 2px solid #c4c4c1;
  border-radius: 5px;
}
.note-scroll::after {
  right: 6px;
}
.view-tabs {
  display: flex;
  align-items: flex-start;
  margin-left: 5px;
}
.view-tab {
  height: 42px;
  padding: 0 6px 8px;
  border: 1px solid #c4c4c1;
  border-top: none;
  border-radius: 0 0 4px 4px;
  background: linear-gradient(#dededb, #eeeeea);
  color: #999996;
}
.view-tab.active {
  height: 45px;
  padding: 0 5px 6px;
  background: #fafafa;
  color: #6e6e6b;
}

.status {
  height: 19px;
  padding-left: 2px;
  line-height: 27px;
  white-space: nowrap;
  overflow: hidden;
  flex: none;
}

/* overlays */
.cursor {
  position: absolute;
  left: 0;
  top: 830px;
  width: 16px;
  height: 30px;
}
.brand {
  position: absolute;
  right: 101px;
  bottom: 62px;
  width: 100px;
  height: 172px;
}
```
